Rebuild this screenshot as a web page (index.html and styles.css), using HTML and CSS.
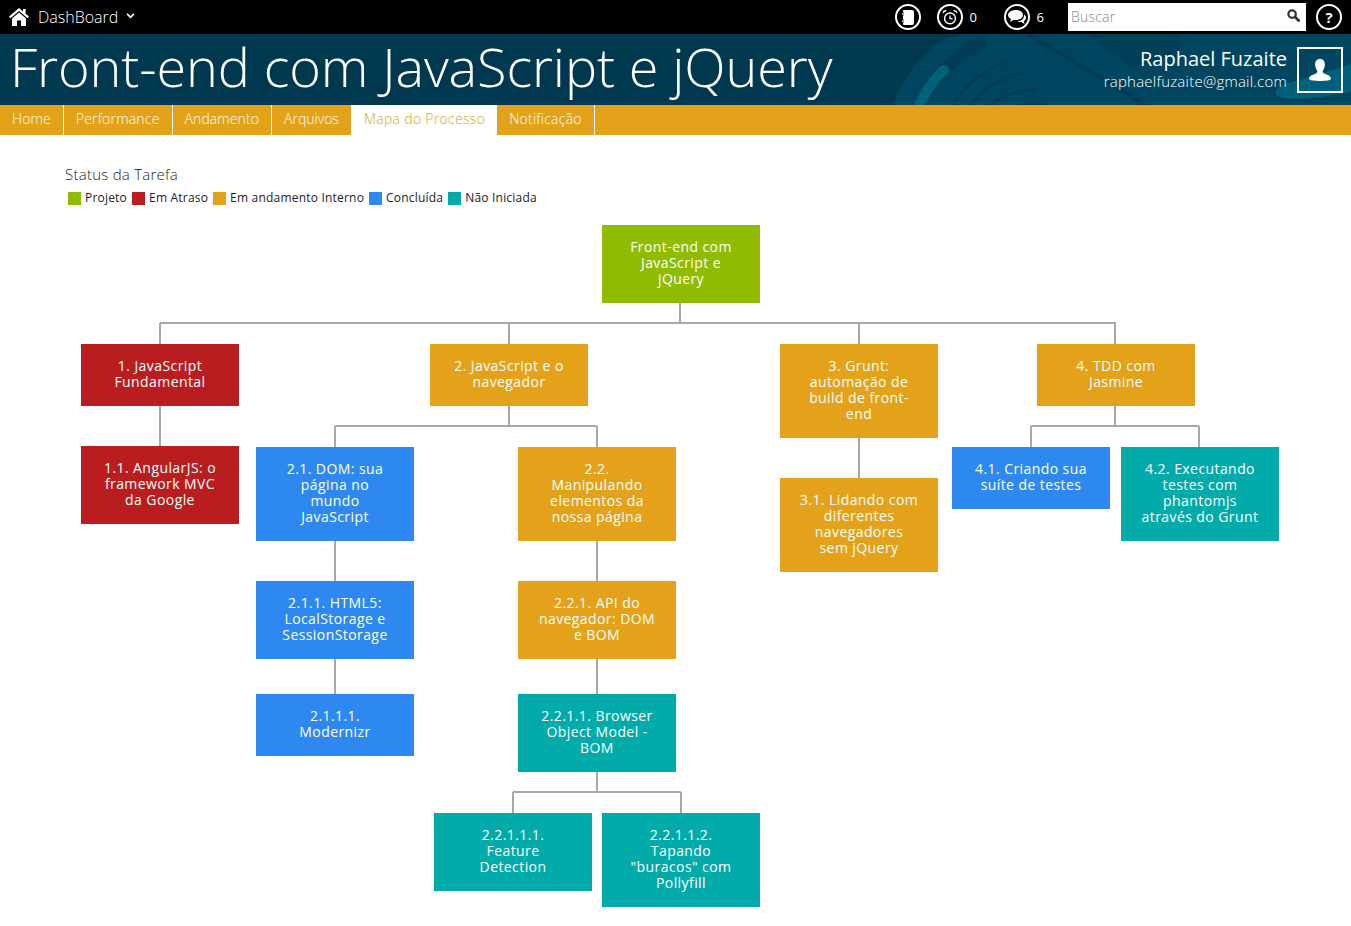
FILE: index.html
```html
<!DOCTYPE html>
<html>
<head>
    <title>Mapa do Processo</title>
    <link rel="stylesheet" href="styles.css">
</head>
<body>

    <div class="topbar">
        <a class="brand" href="#">
            <svg class="home-icon" viewBox="0 0 20 18" width="20" height="18"><path fill="#fff" d="M10 0 L0 8.6 L1.5 10.2 L10 2.9 L18.5 10.2 L20 8.6 L16.6 5.7 V1 H14 V3.5 Z M10 4.6 L3 10.6 V18 H8 V12.5 H12 V18 H17 V10.6 Z"/></svg>
            DashBoard
            <svg class="caret" viewBox="0 0 10 7" width="9" height="6"><path fill="none" stroke="#fff" stroke-width="2" d="M1 1 L5 5 L9 1"/></svg>
        </a>
        <div class="top-tools">
            <span class="round-icon tool-book">
                <svg viewBox="0 0 13 15" width="13" height="15"><path fill="#fff" d="M3 0 H11 Q13 0 13 2 V13 Q13 15 11 15 H3 Q2 15 2 14 V12.6 H3 V11.8 H1 V10.6 H3 V9.8 H2 V5.2 H3 V4.4 H1 V3.2 H3 V2.4 H2 V1 Q2 0 3 0 Z"/></svg>
            </span>
            <span class="round-icon tool-clock">
                <svg viewBox="0 0 16 16" width="16" height="16"><circle cx="8" cy="9.4" r="5.4" fill="none" stroke="#fff" stroke-width="1.4"/><path fill="none" stroke="#fff" stroke-width="1.2" d="M8 6.4 V9.6 H10.6"/><path fill="#fff" d="M0.6 4.4 A3 3 0 0 1 5 1.4 Z M15.4 4.4 A3 3 0 0 0 11 1.4 Z"/></svg>
            </span>
            <span class="tool-count count-clock">0</span>
            <span class="round-icon tool-chat">
                <svg viewBox="0 0 18 15" width="18" height="15"><path fill="#fff" d="M8 0 C12.4 0 15 2.3 15 5 C15 7.8 12.2 10 8 10 C7.2 10 6.5 9.9 5.9 9.8 L2 12 L3 8.9 C1.2 8 0 6.7 0 5 C0 2.3 3.6 0 8 0 Z"/><path fill="#fff" d="M16 4.5 C17.3 5.4 18 6.5 18 7.8 C18 9.2 17.2 10.4 15.8 11.2 L16.6 14 L13.2 12 C12 12.1 10.6 12 9.4 11.4 C13.4 11.2 16.4 8.6 16 4.5 Z"/></svg>
            </span>
            <span class="tool-count">6</span>
            <div class="search">
                <input class="search-input" type="text" placeholder="Buscar">
                <svg class="search-icon" viewBox="0 0 14 14" width="13" height="13"><circle cx="5.5" cy="5.5" r="4" fill="none" stroke="#333" stroke-width="2.4"/><path stroke="#333" stroke-width="3" stroke-linecap="round" d="M9 9 L12.5 12.5"/></svg>
            </div>
            <span class="round-icon tool-help">?</span>
        </div>
    </div>

    <div class="banner">
        <svg class="banner-art" viewBox="0 0 471 71" width="471" height="71">
            <path fill="#00455f" d="M13 71 C20 50 32 32 53 13 C62 6 70 3 80 0 H471 V71 Z"/>
            <path fill="#003f58" d="M208 0 L250 33 L300 22 L300 0 Z"/>
            <path fill="none" stroke="#003d55" stroke-width="3" d="M73 71 C86 50 105 35 127 28"/>
            <path fill="none" stroke="#003d55" stroke-width="3" d="M90 71 C102 56 120 44 142 40"/>
            <path fill="none" stroke="#003d55" stroke-width="3" d="M110 71 C122 62 140 56 158 55"/>
            <path fill="none" stroke="#003d55" stroke-width="4" d="M138 72 C148 70 158 70 167 71"/>
            <path fill="none" stroke="#003c54" stroke-width="13" d="M64 36 C76 24 90 14 105 7"/>
            <path fill="none" stroke="#00617a" stroke-width="10" stroke-linecap="round" d="M36 78 C44 60 52 46 64 36"/>
            <path fill="none" stroke="#003d55" stroke-width="4" d="M147 0 C185 22 230 48 267 73"/>
            <path fill="#005f7a" d="M471 30 L420 46 C400 50 394 56 396 60 C400 66 420 66 440 63 L471 58 Z"/>
        </svg>
        <h1 class="page-title">Front-end com JavaScript e jQuery</h1>
        <div class="user-info">
            <div class="user-text">
                <div class="user-name">Raphael Fuzaite</div>
                <div class="user-mail">raphaelfuzaite@gmail.com</div>
            </div>
            <div class="avatar">
                <svg viewBox="0 0 20 20" width="22" height="22"><path fill="#fff" d="M10 0 C13 0 14.4 2 14.4 5 C14.4 7.6 13.4 9.6 12.4 11 C12.2 12.4 13 13 15 13.8 C17.4 14.6 20 15.4 20 18 C20 19.4 15 20 10 20 C5 20 0 19.4 0 18 C0 15.4 2.6 14.6 5 13.8 C7 13 7.8 12.4 7.6 11 C6.6 9.6 5.6 7.6 5.6 5 C5.6 2 7 0 10 0 Z"/></svg>
            </div>
        </div>
    </div>

    <div class="nav">
        <a class="nav-item" href="#">Home</a>
        <a class="nav-item" href="#">Performance</a>
        <a class="nav-item" href="#">Andamento</a>
        <a class="nav-item" href="#">Arquivos</a>
        <a class="nav-item active" href="#">Mapa do Processo</a>
        <a class="nav-item" href="#">Notificação</a>
    </div>

    <div class="content">
        <div class="status-title">Status da Tarefa</div>
        <div class="legend">
            <span class="legend-item"><i class="swatch green"></i>Projeto</span>
            <span class="legend-item"><i class="swatch red"></i>Em Atraso</span>
            <span class="legend-item"><i class="swatch orange"></i>Em andamento Interno</span>
            <span class="legend-item"><i class="swatch blue"></i>Concluída</span>
            <span class="legend-item"><i class="swatch teal"></i>Não Iniciada</span>
        </div>

        <div class="tree">
            <svg class="links" width="1351" height="711">
                <path d="M680 88 V108 M160 108 H1116 M160 108 V129 M509 108 V129 M859 108 V129 M1115 108 V129"/>
                <path d="M160 191 V231"/>
                <path d="M509 191 V211 M335 211 H597 M335 211 V232 M597 211 V232"/>
                <path d="M335 326 V366 M335 444 V479"/>
                <path d="M597 326 V366 M597 444 V479 M597 557 V577 M513 577 H681 M513 577 V598 M681 577 V598"/>
                <path d="M859 223 V263"/>
                <path d="M1115 191 V211 M1031 211 H1199 M1031 211 V232 M1199 211 V232"/>
            </svg>

            <div class="node green n-root">Front-end com<br>JavaScript e<br>jQuery</div>

            <div class="node red n-1">1. JavaScript<br>Fundamental</div>
            <div class="node red n-1-1">1.1. AngularJS: o<br>framework MVC<br>da Google</div>

            <div class="node orange n-2">2. JavaScript e o<br>navegador</div>
            <div class="node blue n-2-1">2.1. DOM: sua<br>página no<br>mundo<br>JavaScript</div>
            <div class="node blue n-2-1-1">2.1.1. HTML5:<br>LocalStorage e<br>SessionStorage</div>
            <div class="node blue n-2-1-1-1">2.1.1.1.<br>Modernizr</div>
            <div class="node orange n-2-2">2.2.<br>Manipulando<br>elementos da<br>nossa página</div>
            <div class="node orange n-2-2-1">2.2.1. API do<br>navegador: DOM<br>e BOM</div>
            <div class="node teal n-2-2-1-1">2.2.1.1. Browser<br>Object Model -<br>BOM</div>
            <div class="node teal n-2-2-1-1-1">2.2.1.1.1.<br>Feature<br>Detection</div>
            <div class="node teal n-2-2-1-1-2">2.2.1.1.2.<br>Tapando<br>"buracos" com<br>Pollyfill</div>

            <div class="node orange n-3">3. Grunt:<br>automação de<br>build de front-<br>end</div>
            <div class="node orange n-3-1">3.1. Lidando com<br>diferentes<br>navegadores<br>sem jQuery</div>

            <div class="node orange n-4">4. TDD com<br>Jasmine</div>
            <div class="node blue n-4-1">4.1. Criando sua<br>suíte de testes</div>
            <div class="node teal n-4-2">4.2. Executando<br>testes com<br>phantomjs<br>através do Grunt</div>
        </div>
    </div>

</body>
</html>
```

FILE: styles.css
```css
* {
    box-sizing: border-box;
}

body {
    margin: 0;
    background: #fff;
    font-family: "Open Sans", sans-serif;
    color: #222;
}

a {
    text-decoration: none;
}

/* top black bar */
.topbar {
    height: 34px;
    background: #000;
    display: flex;
    align-items: center;
    justify-content: space-between;
    padding: 0 9px 0 9px;
}

.brand {
    display: flex;
    align-items: center;
    color: #fff;
    font-size: 16px;
    font-weight: 300;
}

.home-icon {
    margin-right: 9px;
}

.caret {
    margin-left: 8px;
    margin-top: -3px;
}

.top-tools {
    display: flex;
    align-items: center;
}

.round-icon {
    width: 26px;
    height: 26px;
    border: 2px solid #fff;
    border-radius: 50%;
    display: flex;
    align-items: center;
    justify-content: center;
    color: #fff;
}

.tool-clock {
    margin-left: 16px;
}

.tool-count {
    color: #fff;
    font-size: 13px;
    margin-left: 7px;
}

.count-clock {
    width: 34px;
}

.search {
    width: 238px;
    height: 28px;
    margin-left: 24px;
    background: #fff;
    display: flex;
    align-items: center;
}

.search-input {
    flex: 1;
    min-width: 0;
    border: 0;
    outline: 0;
    padding: 0 0 2px 3px;
    font-family: "Open Sans", sans-serif;
    font-size: 14px;
    font-weight: 300;
    letter-spacing: 0.2px;
    background: transparent;
}

.search-input::placeholder {
    color: #888;
}

.search-icon {
    margin-right: 6px;
    margin-top: -4px;
}

.tool-help {
    margin-left: 10px;
    font-size: 15px;
    font-weight: 700;
}

/* banner with course title */
.banner {
    position: relative;
    height: 71px;
    background: #003850;
    display: flex;
    align-items: center;
    justify-content: space-between;
    padding: 0 8px 0 10px;
}

.banner-art {
    position: absolute;
    right: 0;
    top: 0;
}

.page-title {
    position: relative;
    margin: 0 0 6px;
    color: #fff;
    font-size: 54px;
    font-weight: 300;
    letter-spacing: -0.12px;
    line-height: 65px;
    white-space: nowrap;
}

.user-info {
    position: relative;
    display: flex;
    align-items: center;
}

.user-text {
    color: #fff;
    text-align: right;
    margin: 0 10px 1px 0;
}

.user-name {
    font-size: 20px;
    line-height: 24px;
}

.user-mail {
    font-size: 15px;
    font-weight: 300;
    letter-spacing: 0.23px;
    line-height: 20px;
}

.avatar {
    width: 46px;
    height: 46px;
    border: 2px solid #fff;
    display: flex;
    align-items: center;
    justify-content: center;
}

/* tabs */
.nav {
    height: 30px;
    background: #e3a21a;
    display: flex;
}

.nav-item {
    padding: 0 12px;
    line-height: 28px;
    color: #fff;
    font-size: 14px;
    font-weight: 300;
    letter-spacing: 0.1px;
    border-right: 1px solid #fff;
}

.nav-item:nth-child(2) {
    letter-spacing: 0.2px;
}

.nav-item:nth-child(4) {
    letter-spacing: 0;
}

.nav-item.active {
    background: #fff;
    color: #e3a21a;
    border-right: 0;
    letter-spacing: 0.3px;
}

.nav-item:last-child {
    letter-spacing: 0.25px;
}

/* content */
.status-title {
    padding: 29px 0 0 65px;
    font-size: 15px;
    font-weight: 300;
    letter-spacing: 0.25px;
    line-height: 20px;
}

.legend {
    display: flex;
    height: 31px;
    padding: 4px 0 7px 68px;
    font-size: 12px;
    letter-spacing: 0.2px;
    line-height: 20px;
}

.legend-item {
    display: flex;
    align-items: center;
    margin-right: 5px;
}

.swatch {
    width: 13px;
    height: 13px;
    margin-right: 4px;
}

.green {
    background: #8fbc00;
}

.red {
    background: #b91d1f;
}

.orange {
    background: #e3a21a;
}

.blue {
    background: #2d89ef;
}

.teal {
    background: #00aba9;
}

/* process map: nodes sit on a free canvas */
.tree {
    position: relative;
    height: 711px;
}

.links {
    position: absolute;
    left: 0;
    top: 0;
}

.links path {
    fill: none;
    stroke: #a8a8a8;
    stroke-width: 2;
}

.node {
    position: absolute;
    width: 158px;
    padding: 14px 10px 16px;
    color: #fff;
    font-size: 14px;
    letter-spacing: 0.42px;
    line-height: 16px;
    text-align: center;
    white-space: nowrap;
}

.n-root { left: 602px; top: 10px; }
.n-1 { left: 81px; top: 129px; }
.n-1-1 { left: 81px; top: 231px; }
.n-2 { left: 430px; top: 129px; }
.n-2-1 { left: 256px; top: 232px; }
.n-2-1-1 { left: 256px; top: 366px; }
.n-2-1-1-1 { left: 256px; top: 479px; }
.n-2-2 { left: 518px; top: 232px; }
.n-2-2-1 { left: 518px; top: 366px; }
.n-2-2-1-1 { left: 518px; top: 479px; }
.n-2-2-1-1-1 { left: 434px; top: 598px; }
.n-2-2-1-1-2 { left: 602px; top: 598px; }
.n-3 { left: 780px; top: 129px; }
.n-3-1 { left: 780px; top: 263px; }
.n-4 { left: 1037px; top: 129px; }
.n-4-1 { left: 952px; top: 232px; }
.n-4-2 { left: 1121px; top: 232px; }
```
